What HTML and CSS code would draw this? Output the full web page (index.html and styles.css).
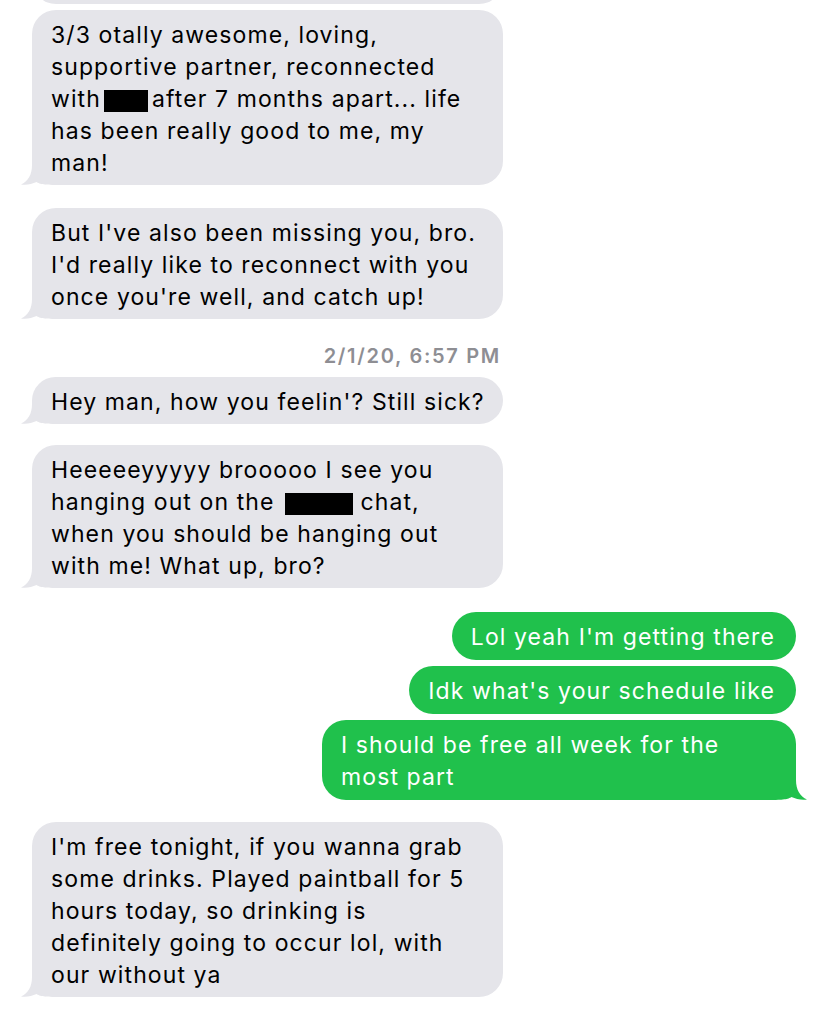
FILE: index.html
```html
<!DOCTYPE html>
<html lang="en">
<head>
<meta charset="utf-8">
<title>Messages</title>
<link rel="stylesheet" href="styles.css">
</head>
<body>
<main class="thread">
  <div class="msg in prev"></div>

  <div class="msg in tail gap-s">3/3 otally awesome, loving,<br>supportive partner, reconnected<br>with<span class="redact r1"></span>after 7 months apart... life<br>has been really good to me, my<br>man!<svg class="tail-svg" viewBox="0 0 40 24" width="40" height="24"><path d="M11 0 L11 4 C11 14 7 20 0 23.6 C6 24.4 11 23 15.5 21 C19 23.2 23 24 40 24 L40 0 Z"/></svg></div>

  <div class="msg in tail gap-m">But I've also been missing you, bro.<br>I'd really like to reconnect with you<br>once you're well, and catch up!<svg class="tail-svg" viewBox="0 0 40 24" width="40" height="24"><path d="M11 0 L11 4 C11 14 7 20 0 23.6 C6 24.4 11 23 15.5 21 C19 23.2 23 24 40 24 L40 0 Z"/></svg></div>

  <div class="stamp">2/1/20, 6:57 PM</div>

  <div class="msg in tail after-stamp">Hey man, how you feelin'? Still sick?<svg class="tail-svg" viewBox="0 0 40 24" width="40" height="24"><path d="M11 0 L11 4 C11 14 7 20 0 23.6 C6 24.4 11 23 15.5 21 C19 23.2 23 24 40 24 L40 0 Z"/></svg></div>

  <div class="msg in tail gap-l">Heeeeeyyyyy brooooo I see you<br>hanging out on the<span class="redact r2"></span>chat,<br>when you should be hanging out<br>with me! What up, bro?<svg class="tail-svg" viewBox="0 0 40 24" width="40" height="24"><path d="M11 0 L11 4 C11 14 7 20 0 23.6 C6 24.4 11 23 15.5 21 C19 23.2 23 24 40 24 L40 0 Z"/></svg></div>

  <div class="msg out gap-xl">Lol yeah I'm getting there</div>
  <div class="msg out gap-s">Idk what's your schedule like</div>
  <div class="msg out wide tail gap-s">I should be free all week for the<br>most part<svg class="tail-svg" viewBox="0 0 40 24" width="40" height="24"><path d="M11 0 L11 4 C11 14 7 20 0 23.6 C6 24.4 11 23 15.5 21 C19 23.2 23 24 40 24 L40 0 Z"/></svg></div>

  <div class="msg in tail gap-l">I'm free tonight, if you wanna grab<br>some drinks. Played paintball for 5<br>hours today, so drinking is<br>definitely going to occur lol, with<br>our without ya<svg class="tail-svg" viewBox="0 0 40 24" width="40" height="24"><path d="M11 0 L11 4 C11 14 7 20 0 23.6 C6 24.4 11 23 15.5 21 C19 23.2 23 24 40 24 L40 0 Z"/></svg></div>
</main>
</body>
</html>
```

FILE: styles.css
```css
html, body {
  margin: 0;
  padding: 0;
  background: #ffffff;
}

body {
  width: 816px;
  height: 1014px;
  overflow: hidden;
  font-family: "Inter", "Liberation Sans", sans-serif;
}

.thread {
  display: flex;
  flex-direction: column;
}

.msg {
  position: relative;
  z-index: 0;
  box-sizing: border-box;
  font-size: 23px;
  letter-spacing: 1.1px;
  line-height: 32px;
  border-radius: 24px;
  white-space: nowrap;
}

.msg.in {
  align-self: flex-start;
  margin-left: 32px;
  width: 471px;
  padding: 9px 20px 6px 19px;
  background: #e5e5ea;
  color: #000000;
}

.msg.out {
  align-self: flex-end;
  margin-right: 20px;
  width: fit-content;
  padding: 9px 21px 7px 19px;
  background: #20c14c;
  color: #ffffff;
}

.msg.out.wide {
  width: 474px;
}

.msg.prev {
  height: 48px;
  margin-top: -44px;
}

.gap-s { margin-top: 6px; }
.gap-m { margin-top: 23px; }
.gap-l { margin-top: 21px; }
.gap-xl { margin-top: 24px; }

.stamp {
  align-self: flex-end;
  margin: 25px 315px 0 0;
  height: 24px;
  line-height: 24px;
  font-size: 20px;
  letter-spacing: 1.7px;
  font-weight: 600;
  color: #8e8e93;
}

.after-stamp { margin-top: 9px; }

.msg.in + .msg.out { margin-top: 24px; }
.msg.out + .msg.in { margin-top: 22px; }

.tail-svg {
  position: absolute;
  z-index: -1;
  display: block;
  bottom: 0;
  left: -11px;
}

.msg.in .tail-svg path { fill: #e5e5ea; }

.msg.out .tail-svg {
  left: auto;
  right: -11px;
  transform: scaleX(-1);
}

.msg.out .tail-svg path { fill: #20c14c; }

.redact {
  display: inline-block;
  background: #000000;
  height: 22px;
  vertical-align: -5px;
}

.r1 { width: 44px; margin: 0 4px 0 3px; }
.r2 { width: 68px; margin: 0 8px 0 10px; }
```
